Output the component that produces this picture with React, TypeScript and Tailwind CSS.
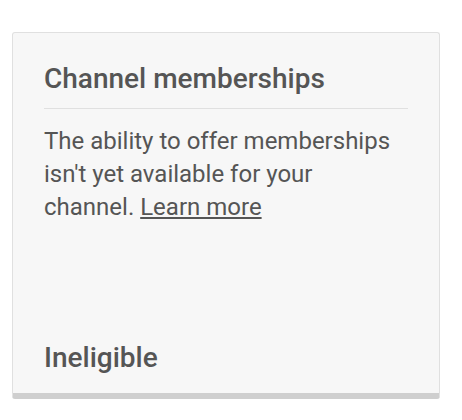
import React from "react";

function App() {
  return (
    <div className="h-[420px] w-[462px] bg-white pl-[12px] pt-[32px] font-['Roboto',sans-serif]">
      <div className="flex h-[367px] w-[428px] flex-col rounded-[3px] border border-b-[6px] border-[#e0e0e0] border-b-[#cfcfcf] bg-[#f7f7f7] px-[31px] pt-[29px] pb-[18px] text-[#555555]">
        <h2 className="pb-3 text-[28px] leading-[34px] font-medium">
          Channel memberships
        </h2>
        <hr className="border-[#e0e0e0]" />
        <p className="mt-[16px] w-[350px] text-[24px] leading-[33px]">
          The ability to offer memberships isn't yet available for your
          channel.{" "}
          <a href="#" className="underline underline-offset-2">
            Learn more
          </a>
        </p>
        <div className="mt-auto text-[28px] leading-[34px] font-medium">
          Ineligible
        </div>
      </div>
    </div>
  );
}

export default App;
